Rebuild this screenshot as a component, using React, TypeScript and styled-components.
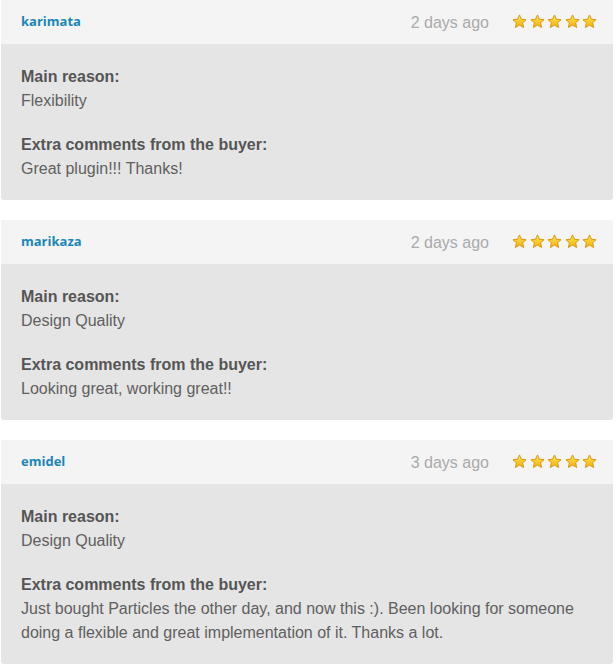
import React from "react";
import styled, { createGlobalStyle } from "styled-components";

const Global = createGlobalStyle`
  html, body { margin: 0; padding: 0; background: #ffffff; }
  body { font-family: "Liberation Sans", Arial, sans-serif; }
`;

const List = styled.div`
  display: flex;
  flex-direction: column;
  gap: 20px;
  margin: 0 3px 0 1px;
`;

const Card = styled.div`
  border-radius: 3px;
  overflow: hidden;
  background: #e5e5e5;
`;

const Header = styled.div`
  height: 44px;
  background: #f4f4f4;
  display: flex;
  align-items: center;
  padding: 0 16px 0 20px;
`;

const User = styled.a`
  font-family: "Open Sans", "Liberation Sans", sans-serif;
  font-weight: 700;
  font-size: 13px;
  color: #1a86b8;
  text-decoration: none;
  margin-top: -2px;
`;

const Date = styled.span`
  margin-left: auto;
  font-size: 16px;
  color: #aaaaaa;
  margin-right: 23px;
  margin-top: 1px;
`;

const Stars = styled.div`
  display: flex;
  gap: 2.5px;
  margin-top: -1px;
`;

const Body = styled.div`
  padding: 21px 20px 19px;
  font-size: 16px;
  line-height: 24px;
  color: #5a5a5a;
  display: flex;
  flex-direction: column;
  gap: 20px;
`;

const Section = styled.div``;

const Label = styled.div`
  font-weight: 700;
  color: #555555;
`;

const Value = styled.div`
  color: #606060;
`;

const Star = () => (
  <svg width="15" height="15" viewBox="0 0 16 16">
    <defs>
      <linearGradient id="sg" x1="0" y1="0" x2="0" y2="1">
        <stop offset="0" stopColor="#ffe45c" />
        <stop offset="1" stopColor="#f5b300" />
      </linearGradient>
    </defs>
    <polygon
      points="8,1 10.1,5.6 15,6.1 11.3,9.4 12.4,14.4 8,11.8 3.6,14.4 4.7,9.4 1,6.1 5.9,5.6"
      fill="url(#sg)"
      stroke="#d9920a"
      strokeWidth="1"
      strokeLinejoin="round"
    />
  </svg>
);

type Review = { user: string; date: string; reason: string; comment: string };

const reviews: Review[] = [
  { user: "karimata", date: "2 days ago", reason: "Flexibility", comment: "Great plugin!!! Thanks!" },
  { user: "marikaza", date: "2 days ago", reason: "Design Quality", comment: "Looking great, working great!!" },
  {
    user: "emidel",
    date: "3 days ago",
    reason: "Design Quality",
    comment:
      "Just bought Particles the other day, and now this :). Been looking for someone doing a flexible and great implementation of it. Thanks a lot.",
  },
];

export default function App() {
  return (
    <>
      <Global />
      <List>
        {reviews.map((r) => (
          <Card key={r.user}>
            <Header>
              <User href="#">{r.user}</User>
              <Date>{r.date}</Date>
              <Stars>
                {[0, 1, 2, 3, 4].map((i) => (
                  <Star key={i} />
                ))}
              </Stars>
            </Header>
            <Body>
              <Section>
                <Label>Main reason:</Label>
                <Value>{r.reason}</Value>
              </Section>
              <Section>
                <Label>Extra comments from the buyer:</Label>
                <Value>{r.comment}</Value>
              </Section>
            </Body>
          </Card>
        ))}
      </List>
    </>
  );
}
